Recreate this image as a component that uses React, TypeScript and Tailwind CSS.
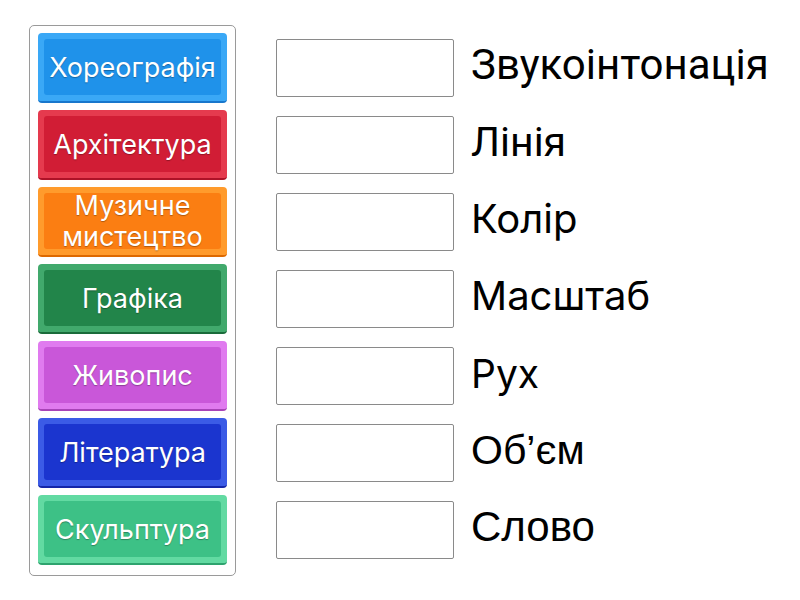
import React from 'react';

const tiles = [
  { label: 'Хореографія', edge: 'bg-[#3aa8f6]', face: 'bg-[#1f92ea]', base: 'border-[#1877cc]' },
  { label: 'Архітектура', edge: 'bg-[#e53a4e]', face: 'bg-[#d11d35]', base: 'border-[#ad1227]' },
  { label: 'Музичне мистецтво', edge: 'bg-[#ff9b2c]', face: 'bg-[#fb7e12]', base: 'border-[#dd6900]' },
  { label: 'Графіка', edge: 'bg-[#41a96c]', face: 'bg-[#22854a]', base: 'border-[#1a6b3a]' },
  { label: 'Живопис', edge: 'bg-[#e07bef]', face: 'bg-[#c957d9]', base: 'border-[#a843b7]' },
  { label: 'Література', edge: 'bg-[#3b5be6]', face: 'bg-[#1b35cf]', base: 'border-[#1426a8]' },
  { label: 'Скульптура', edge: 'bg-[#62daa2]', face: 'bg-[#3dc186]', base: 'border-[#2ea36e]' },
];

const answers = [
  { text: 'Звукоінтонація', font: "font-['Roboto',sans-serif] text-[42px]" },
  { text: 'Лінія', font: "font-['Roboto',sans-serif] text-[41px]" },
  { text: 'Колір', font: "font-['Inter',sans-serif] text-[40px]" },
  { text: 'Масштаб', font: "font-['Inter',sans-serif] text-[40px]" },
  { text: 'Рух', font: "font-['Inter',sans-serif] text-[39px]" },
  { text: 'Об’єм', font: "font-['Liberation_Sans',sans-serif] text-[41px]" },
  { text: 'Слово', font: "font-['Liberation_Sans',sans-serif] text-[42px]" },
];

function Tile({ label, edge, face, base }: (typeof tiles)[number]) {
  return (
    <div className={`h-[70px] rounded-[4px] border-b-2 ${base} ${edge} px-[6px] pt-[6px] pb-[6px]`}>
      <div className={`flex h-full items-center justify-center rounded-[3px] ${face} text-center`}>
        <span className="font-['Inter',sans-serif] text-[27px] leading-[31px] text-white [text-shadow:0_1px_1px_rgba(0,0,0,0.3)]">
          {label}
        </span>
      </div>
    </div>
  );
}

export default function App() {
  return (
    <div className="flex h-[600px] w-[800px] bg-white">
      <div className="ml-[29px] mt-[25px] flex h-[551px] w-[207px] flex-col gap-[7px] rounded-[5px] border border-[#9a9a9a] bg-white px-[8px] pt-[7px]">
        {tiles.map(t => (
          <Tile key={t.label} {...t} />
        ))}
      </div>

      <div className="ml-[40px] mt-[39px] flex flex-col gap-[19px]">
        {answers.map(a => (
          <div key={a.text} className="flex items-center gap-[17px]">
            <div className="h-[58px] w-[178px] shrink-0 rounded-[2px] border border-[#8a8a8a] bg-white" />
            <span className={`${a.font} -mt-[6px] leading-none text-black`}>{a.text}</span>
          </div>
        ))}
      </div>
    </div>
  );
}
